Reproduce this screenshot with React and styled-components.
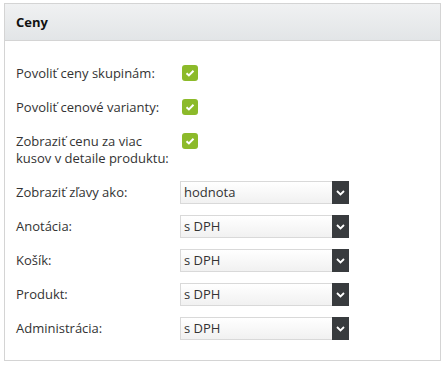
import React from 'react'
import styled, { createGlobalStyle } from 'styled-components'

const GlobalStyle = createGlobalStyle`
  html, body {
    margin: 0;
    padding: 0;
    background: #fff;
  }
  body {
    font-family: 'Open Sans', 'DejaVu Sans', sans-serif;
    font-size: 13px;
    color: #333;
  }
`

const Page = styled.div`
  padding: 3px 5px 0 4px;
`

const Panel = styled.section`
  width: 437px;
  box-sizing: border-box;
  border: 1px solid #d4d4d4;
  background: #fff;
`

const PanelHeader = styled.header`
  height: 36px;
  display: flex;
  align-items: center;
  padding: 0 11px;
  background: linear-gradient(to bottom, #f0f1f2, #e2e5e7);
  border-bottom: 1px solid #d4d4d4;

  h2 {
    margin: 0;
    font-size: 13px;
    font-weight: 700;
    color: #111;
  }
`

const PanelBody = styled.div`
  padding: 21px 11px 20px;
  display: flex;
  flex-direction: column;
  gap: 11px;
`

const Row = styled.div`
  display: flex;
  align-items: flex-start;
`

const Label = styled.label`
  width: 164px;
  flex: none;
  padding: 3px 0;
  line-height: 17px;
  color: #333;
`

const Check = styled.span`
  margin: 3px 0 0 2px;
  width: 16px;
  height: 16px;
  border-radius: 3px;
  background: #8cba2a;
  display: flex;
  align-items: center;
  justify-content: center;
`

const Select = styled.div`
  width: 169px;
  height: 23px;
  box-sizing: border-box;
  display: flex;
  border: 1px solid #d9d9d9;
  border-right: none;
  background: linear-gradient(to bottom, #ffffff, #f1f1f1);
`

const SelectValue = styled.span`
  flex: 1;
  padding-left: 3px;
  line-height: 21px;
  color: #333;
`

const SelectButton = styled.span`
  width: 17px;
  margin: -1px 0;
  background: #383b3e;
  display: flex;
  align-items: center;
  justify-content: center;
`

const checkRows = [
  'Povoliť ceny skupinám:',
  'Povoliť cenové varianty:',
  'Zobraziť cenu za viac kusov v detaile produktu:',
]

const selectRows = [
  ['Zobraziť zľavy ako:', 'hodnota'],
  ['Anotácia:', 's DPH'],
  ['Košík:', 's DPH'],
  ['Produkt:', 's DPH'],
  ['Administrácia:', 's DPH'],
]

const CheckIcon = () => (
  <svg width="10" height="8" viewBox="0 0 10 8">
    <path d="M1.5 4.2 L3.9 6.4 L8.5 1.8" fill="none" stroke="#fff" strokeWidth="2" />
  </svg>
)

const Chevron = () => (
  <svg width="9" height="6" viewBox="0 0 9 6">
    <path d="M1 1 L4.5 4.5 L8 1" fill="none" stroke="#fff" strokeWidth="1.8" />
  </svg>
)

export default function App() {
  return (
    <Page>
      <GlobalStyle />
      <Panel>
        <PanelHeader>
          <h2>Ceny</h2>
        </PanelHeader>
        <PanelBody>
          {checkRows.map((label) => (
            <Row key={label}>
              <Label>{label}</Label>
              <Check>
                <CheckIcon />
              </Check>
            </Row>
          ))}
          {selectRows.map(([label, value]) => (
            <Row key={label}>
              <Label>{label}</Label>
              <Select>
                <SelectValue>{value}</SelectValue>
                <SelectButton>
                  <Chevron />
                </SelectButton>
              </Select>
            </Row>
          ))}
        </PanelBody>
      </Panel>
    </Page>
  )
}
